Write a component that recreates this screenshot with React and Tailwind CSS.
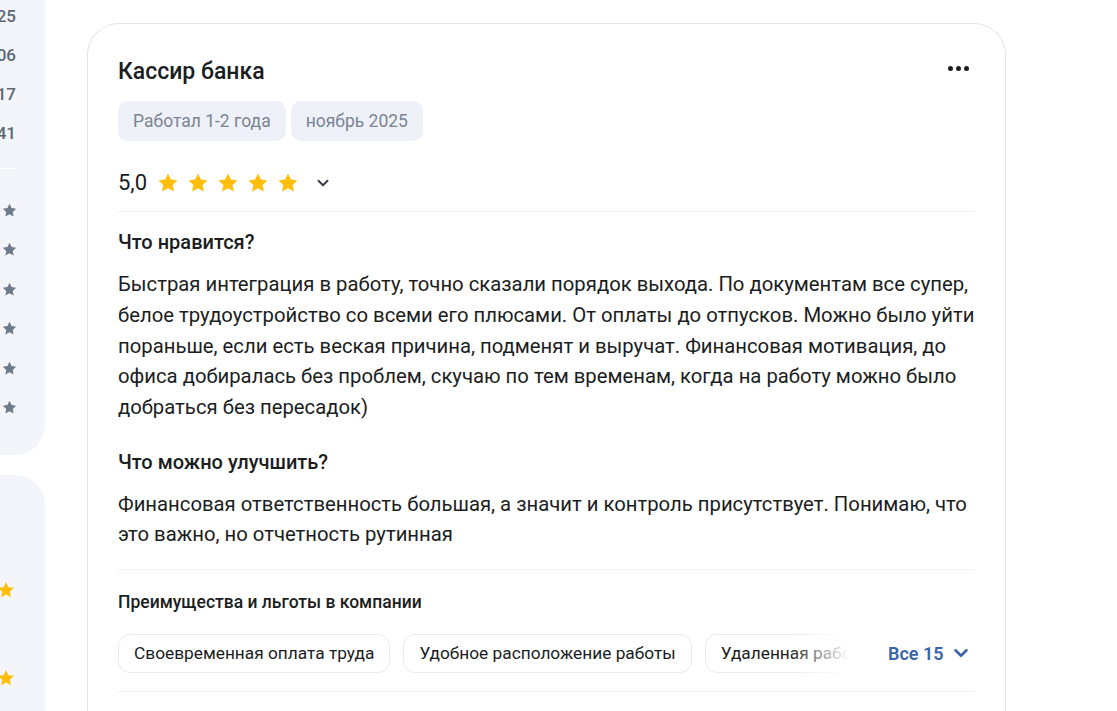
import React from "react";

const Star = ({ className }) => (
  <svg viewBox="0 0 24 24" className={className} fill="currentColor">
    <path d="M12 2.5l2.9 6.1 6.6.8-4.9 4.6 1.3 6.6L12 17.3l-5.9 3.3 1.3-6.6-4.9-4.6 6.6-.8z" />
  </svg>
);

const Chevron = ({ className, sw = "2.6" }) => (
  <svg viewBox="0 0 24 24" className={className} fill="none" stroke="currentColor" strokeWidth={sw} strokeLinecap="round" strokeLinejoin="round">
    <path d="M6 9l6 6 6-6" />
  </svg>
);

const nums = ["1 125", "2 306", "1 117", "3 441"];

export default function App() {
  return (
    <div className="flex h-[711px] overflow-hidden bg-white text-[#1b1d21]" style={{ fontFamily: "Roboto, 'Noto Sans', sans-serif" }}>
      {/* left sidebar */}
      <div className="w-[45px] shrink-0 flex flex-col gap-[20px]">
        <div className="h-[455px] bg-[#f4f5fa] rounded-br-[30px] flex flex-col overflow-hidden">
          <div className="flex flex-col pt-[5px] gap-[15px]">
            {nums.map((n) => (
              <div key={n} className="flex justify-end pr-[29px] h-[24px] items-center whitespace-nowrap text-[17px] font-medium text-[#5d6573]">
                <span className="shrink-0">{n}</span>
              </div>
            ))}
          </div>
          <div className="h-px bg-white w-[16px] mt-[22px]"></div>
          <div className="flex flex-col pt-[33px] gap-[22.4px] items-end pr-[28px]">
            {[0, 1, 2, 3, 4, 5].map((i) => (
              <Star key={i} className="w-[17px] h-[17px] shrink-0 text-[#6e7b8b] -mr-[1px]" />
            ))}
          </div>
        </div>
        <div className="flex-1 bg-[#f4f5fa] rounded-tr-[30px] flex flex-col items-end pr-[30px] pt-[105px] gap-[68px]">
          <Star className="w-[20px] h-[20px] shrink-0 text-[#ffbe0b] -mr-[1px]" />
          <Star className="w-[20px] h-[20px] shrink-0 text-[#ffbe0b] -mr-[1px]" />
        </div>
      </div>
      {/* main */}
      <div className="flex-1 pl-[42px] pt-[23px]">
        <div className="w-[919px] h-[720px] border border-[#e0e4ec] border-b-0 rounded-t-[32px] pl-[30px] pr-[30px] pt-[33px]">
          <div className="flex items-center justify-between">
            <h2 className="text-[23px] font-medium leading-[30px]">Кассир банка</h2>
            <div className="flex gap-[3px] mr-[6px] mb-[7px]">
              <span className="w-[5px] h-[5px] rounded-full bg-[#1b1d21]"></span>
              <span className="w-[5px] h-[5px] rounded-full bg-[#1b1d21]"></span>
              <span className="w-[5px] h-[5px] rounded-full bg-[#1b1d21]"></span>
            </div>
          </div>
          <div className="flex gap-[5px] mt-[14px]">
            <span className="h-[40px] px-[15px] flex items-center rounded-[10px] bg-[#eef1f7] text-[#7b8494] text-[17.5px]">Работал 1-2 года</span>
            <span className="h-[40px] px-[15px] flex items-center rounded-[10px] bg-[#eef1f7] text-[#7b8494] text-[17.5px]">ноябрь 2025</span>
          </div>
          <div className="flex items-center mt-[30px] h-[24px]">
            <span className="text-[22px] leading-none mr-[9px]">5,0</span>
            <div className="flex gap-[6px] text-[#ffbe0b]">
              {[0, 1, 2, 3, 4].map((i) => (
                <Star key={i} className="w-[24px] h-[24px]" />
              ))}
            </div>
            <Chevron className="w-[18px] h-[18px] ml-[14px] text-[#3a3d43]" />
          </div>
          <div className="h-px bg-[#eef0f4] mt-[16px]"></div>
          <h3 className="text-[20px] font-medium mt-[18px] leading-[24px]">Что нравится?</h3>
          <p className="text-[20.3px] leading-[30.8px] mt-[15px] w-[880px]">
            Быстрая интеграция в работу, точно сказали порядок выхода. По документам все супер, белое трудоустройство со всеми его плюсами. От оплаты до отпусков. Можно было уйти пораньше, если есть веская причина, подменят и выручат. Финансовая мотивация, до офиса добиралась без проблем, скучаю по тем временам, когда на работу можно было добраться без пересадок)
          </p>
          <h3 className="text-[20px] font-medium mt-[27px] leading-[24px]">Что можно улучшить?</h3>
          <p className="text-[20.3px] leading-[30.5px] mt-[15px] w-[880px]">
            Финансовая ответственность большая, а значит и контроль присутствует. Понимаю, что это важно, но отчетность рутинная
          </p>
          <div className="h-px bg-[#eef0f4] mt-[19px]"></div>
          <h4 className="text-[17.5px] font-medium mt-[20px] leading-[24px]">Преимущества и льготы в компании</h4>
          <div className="flex items-center mt-[20px]">
            <div className="flex gap-[13px] w-[731px] overflow-hidden relative">
              <span className="shrink-0 h-[39px] px-[15px] flex items-center rounded-[12px] border border-[#e8ebf3] text-[17.3px]">Своевременная оплата труда</span>
              <span className="shrink-0 h-[39px] px-[15px] flex items-center rounded-[12px] border border-[#e8ebf3] text-[17.3px]">Удобное расположение работы</span>
              <span className="shrink-0 h-[39px] px-[15px] flex items-center rounded-[12px] border border-[#e8ebf3] text-[17.3px]">Удаленная работа</span>
              <div className="absolute right-0 top-0 bottom-0 w-[60px] bg-gradient-to-r from-white/0 to-white"></div>
            </div>
            <button className="ml-[39px] flex items-center gap-[6px] text-[#3b64a8] text-[18px] font-semibold">
              Все 15
              <Chevron className="w-[22px] h-[22px]" sw="2.8" />
            </button>
          </div>
          <div className="h-px bg-[#eef0f4] mt-[18px]"></div>
        </div>
      </div>
    </div>
  );
}
